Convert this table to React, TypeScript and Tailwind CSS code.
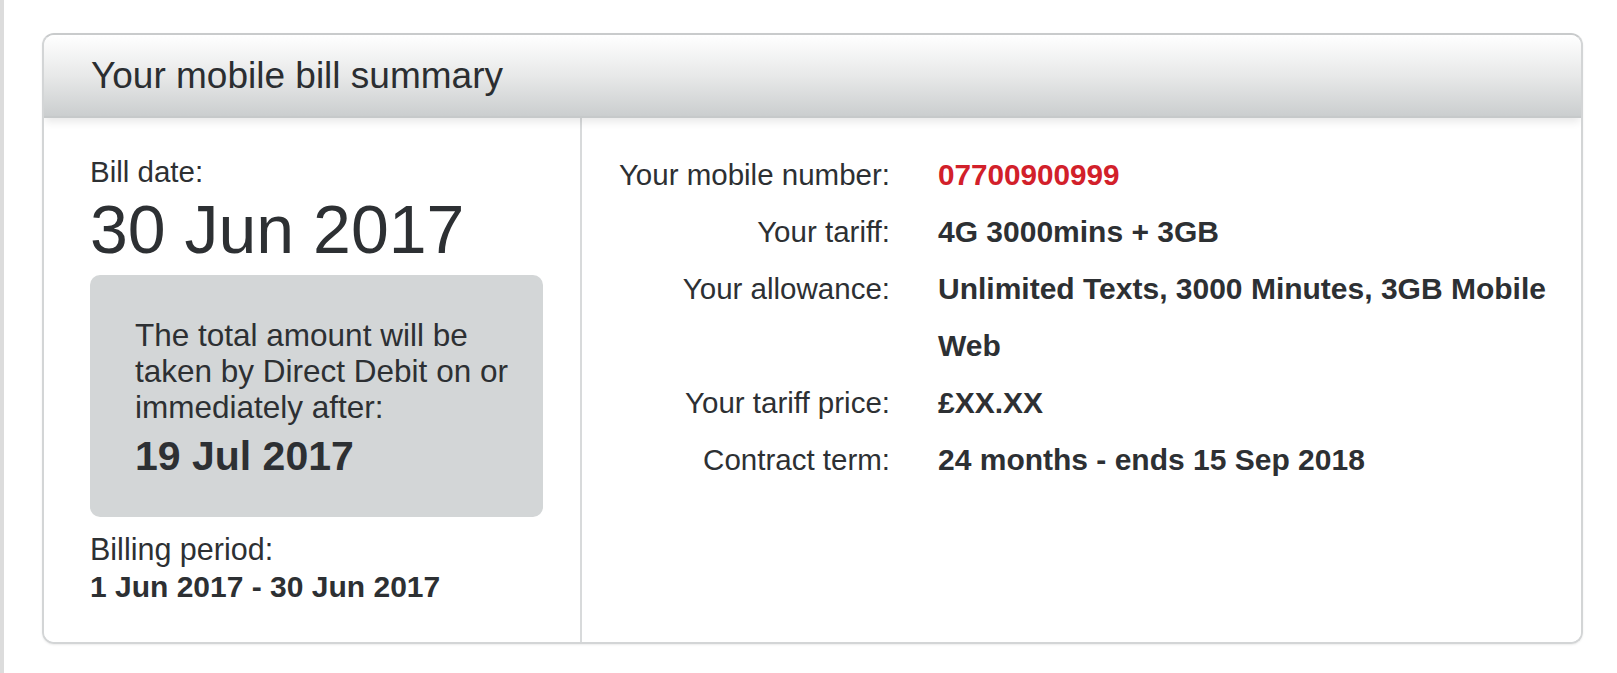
export default function App() {
  const rows = [
    { label: "Your mobile number:", value: "07700900999", red: true },
    { label: "Your tariff:", value: "4G 3000mins + 3GB" },
    { label: "Your allowance:", value: "Unlimited Texts, 3000 Minutes, 3GB Mobile Web" },
    { label: "Your tariff price:", value: "£XX.XX" },
    { label: "Contract term:", value: "24 months - ends 15 Sep 2018" },
  ];
  return (
    <div className="flex h-[673px] w-[1617px] bg-white text-[#2d3033] font-['Liberation_Sans',Arial,sans-serif]">
      <div className="w-[4px] h-full bg-[#dcdcdc]" />
      <div className="ml-[38px] mt-[33px] w-[1541px] h-[611px] flex flex-col border-2 border-[#d3d5d6] border-t-[#c9cbcc] rounded-[12px] overflow-hidden shadow-[0_1px_2px_rgba(0,0,0,0.08)]">
        <div className="relative z-10 h-[83px] shrink-0 border-b-2 border-[#c6c9ca] bg-linear-to-b from-[#ffffff] via-[#e8e9e9] to-[#cbcecf] shadow-[0_5px_8px_-1px_rgba(0,0,0,0.09)] pl-[47px] flex items-center">
          <span className="text-[37px] leading-[81px] text-[#2b2e31]">Your mobile bill summary</span>
        </div>
        <div className="flex flex-1 bg-white">
          <div className="w-[538px] shrink-0 border-r-2 border-[#d8dadb] pl-[46px] pr-[37px] pt-[36px]">
            <div className="text-[29.5px] leading-[36px]">Bill date:</div>
            <div className="text-[68px] leading-[78px]">30 Jun 2017</div>
            <div className="mt-[7px] rounded-[10px] bg-[#d3d6d7] pl-[45px] pr-[20px] pt-[42px] pb-[37px]">
              <div className="text-[31.5px] leading-[36px]">
                The total amount will be taken by Direct Debit on or immediately after:
              </div>
              <div className="mt-[7px] text-[41px] leading-[48px] font-bold">19 Jul 2017</div>
            </div>
            <div className="mt-[14px] text-[30.5px] leading-[37px]">Billing period:</div>
            <div className="text-[30px] leading-[37px] font-bold">1 Jun 2017 - 30 Jun 2017</div>
          </div>
          <div className="flex-1 pt-[28px]">
            <div className="grid grid-cols-[308px_625px] gap-x-[48px] leading-[57px]">
              {rows.map((r) => (
                <div key={r.label} className="contents">
                  <div className="text-right text-[29.5px]">{r.label}</div>
                  <div className={r.red ? "text-[29.7px] font-bold text-[#d2202a]" : "text-[30px] font-bold"}>{r.value}</div>
                </div>
              ))}
            </div>
          </div>
        </div>
      </div>
    </div>
  );
}
